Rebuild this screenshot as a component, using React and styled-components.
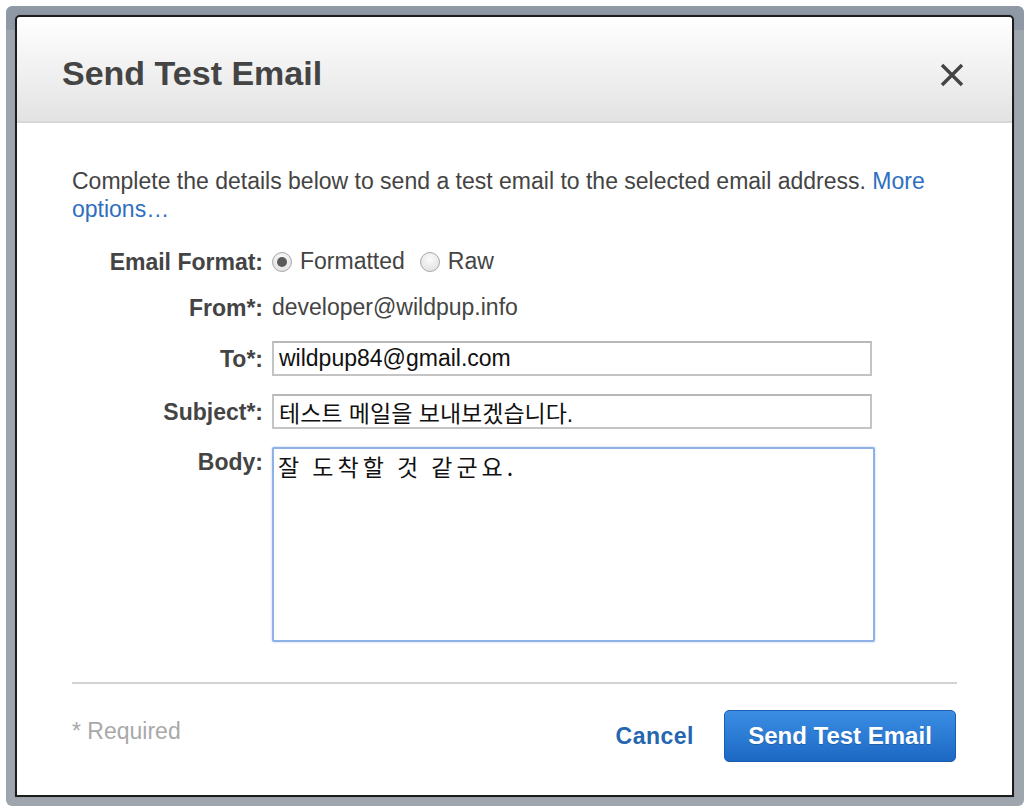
import React from 'react'
import styled, { createGlobalStyle } from 'styled-components'

const GlobalStyle = createGlobalStyle`
  html, body {
    margin: 0;
    padding: 0;
    background: #ffffff;
  }
  body {
    font-family: "Liberation Sans", Arial, "Noto Sans CJK KR", sans-serif;
  }
  * { box-sizing: border-box; }
`

const Frame = styled.div`
  margin: 6px;
  width: 1018px;
  height: 800px;
  padding: 9px 10px 9px 9px;
  border-radius: 6px;
  background: linear-gradient(#8f99a5 0, #8f99a5 24px, #9ea5ad 24px);
`

const Dialog = styled.div`
  height: 100%;
  display: flex;
  flex-direction: column;
  background: #fff;
  border: 2px solid #1c1c1c;
  border-radius: 5px 5px 0 0;
  box-shadow: 0 0 1px rgba(0, 0, 0, 0.4);
`

const Header = styled.div`
  height: 106px;
  flex-shrink: 0;
  display: flex;
  align-items: center;
  justify-content: space-between;
  padding: 0 47px 0 45px;
  background: linear-gradient(#ffffff, #e3e3e3);
  border-bottom: 2px solid #d8d8d8;
  border-radius: 4px 4px 0 0;
`

const Title = styled.h1`
  margin: 8px 0 0;
  font-size: 34px;
  font-weight: bold;
  color: #444;
`

const Close = styled.button`
  width: 26px;
  height: 26px;
  margin-top: 12px;
  padding: 0;
  border: 0;
  background: none;
  cursor: pointer;
`

const Body = styled.div`
  flex: 1;
  display: flex;
  flex-direction: column;
  padding: 44px 55px 0 55px;
  color: #444;
  font-size: 23px;
`

const Intro = styled.p`
  margin: 0 0 21px;
  line-height: 28px;
  color: #444;
`

const Link = styled.a`
  color: #2e6fbf;
  text-decoration: none;
`

const Form = styled.div`
  display: flex;
  flex-direction: column;
`

const Row = styled.div`
  display: flex;
  align-items: ${p => (p.$top ? 'flex-start' : 'center')};
  min-height: 35px;
  margin-bottom: ${p => p.$gap || 0}px;
`

const Label = styled.label`
  width: 200px;
  flex-shrink: 0;
  padding-right: 9px;
  text-align: right;
  font-weight: bold;
  color: #444;
  line-height: 28px;
  padding-top: ${p => (p.$top ? '1px' : '0')};
`

const Value = styled.span`
  color: #444;
`

const RadioGroup = styled.div`
  display: flex;
  align-items: center;
`

const RadioLabel = styled.label`
  display: flex;
  align-items: center;
  margin-right: 15px;
  color: #444;
`

const Radio = styled.input.attrs({ type: 'radio' })`
  appearance: none;
  width: 20px;
  height: 20px;
  margin: 0 8px 0 0;
  border: 1px solid #a8a8a8;
  border-radius: 50%;
  background: radial-gradient(circle at 50% 35%, #fbfbfb, #dcdcdc);
  position: relative;
  &:checked::after {
    content: '';
    position: absolute;
    left: 4px;
    top: 4px;
    width: 10px;
    height: 10px;
    border-radius: 50%;
    background: #5a5a5a;
  }
`

const TextInput = styled.input`
  width: 600px;
  height: 35px;
  padding: 0 5px;
  border: 2px solid #c4c4c4;
  border-top-color: #b8b8b8;
  font-family: "Liberation Sans", Arial, "Noto Sans CJK KR", sans-serif;
  font-size: 23px;
  color: #111;
  background: #fff;
  outline: none;
`

const TextArea = styled.textarea`
  width: 603px;
  height: 195px;
  padding: 3px 4px;
  border: 2px solid #8fb2e6;
  border-radius: 2px;
  box-shadow: 0 0 2px rgba(90, 140, 220, 0.5);
  font-family: "Noto Sans CJK KR", sans-serif;
  font-size: 23px;
  letter-spacing: 4px;
  line-height: 28px;
  color: #111;
  resize: none;
  outline: none;
`

const Divider = styled.hr`
  margin: 40px 0 0;
  border: 0;
  border-top: 2px solid #d2d2d2;
`

const Footer = styled.div`
  display: flex;
  align-items: center;
  justify-content: space-between;
  padding: 26px 1px 0 0;
`

const Required = styled.span`
  color: #a9a9a9;
  margin-top: -10px;
`

const Actions = styled.div`
  display: flex;
  align-items: center;
  gap: 30px;
`

const CancelLink = styled.a`
  color: #2466b0;
  font-weight: bold;
  font-size: 23px;
  letter-spacing: 0.5px;
  text-decoration: none;
  cursor: pointer;
`

const PrimaryButton = styled.button`
  width: 232px;
  height: 52px;
  border: 1px solid #1b5eb0;
  border-radius: 5px;
  background: linear-gradient(#3b8ee4, #1c68c4);
  color: #fff;
  font-family: "Liberation Sans", Arial, sans-serif;
  font-weight: bold;
  font-size: 24px;
  text-shadow: 0 1px 0 rgba(0, 0, 0, 0.2);
  cursor: pointer;
`

const CloseIcon = () => (
  <svg width="26" height="26" viewBox="0 0 26 26">
    <path d="M3 3 L23 23 M23 3 L3 23" stroke="#444" strokeWidth="3.4" strokeLinecap="butt" />
  </svg>
)

export default function App() {
  return (
    <>
      <GlobalStyle />
      <Frame>
        <Dialog>
          <Header>
            <Title>Send Test Email</Title>
            <Close aria-label="Close">
              <CloseIcon />
            </Close>
          </Header>
          <Body>
            <Intro>
              Complete the details below to send a test email to the selected email address.{' '}
              <Link href="#">More options…</Link>
            </Intro>
            <Form>
              <Row $gap={11}>
                <Label>Email Format:</Label>
                <RadioGroup>
                  <RadioLabel>
                    <Radio name="format" defaultChecked />
                    Formatted
                  </RadioLabel>
                  <RadioLabel>
                    <Radio name="format" />
                    Raw
                  </RadioLabel>
                </RadioGroup>
              </Row>
              <Row $gap={16}>
                <Label>From*:</Label>
                <Value>developer@wildpup.info</Value>
              </Row>
              <Row $gap={18}>
                <Label>To*:</Label>
                <TextInput defaultValue="wildpup84@gmail.com" />
              </Row>
              <Row $gap={18}>
                <Label>Subject*:</Label>
                <TextInput defaultValue="테스트 메일을 보내보겠습니다." />
              </Row>
              <Row $top>
                <Label $top>Body:</Label>
                <TextArea defaultValue="잘 도착할 것 같군요." />
              </Row>
            </Form>
            <Divider />
            <Footer>
              <Required>* Required</Required>
              <Actions>
                <CancelLink>Cancel</CancelLink>
                <PrimaryButton>Send Test Email</PrimaryButton>
              </Actions>
            </Footer>
          </Body>
        </Dialog>
      </Frame>
    </>
  )
}
